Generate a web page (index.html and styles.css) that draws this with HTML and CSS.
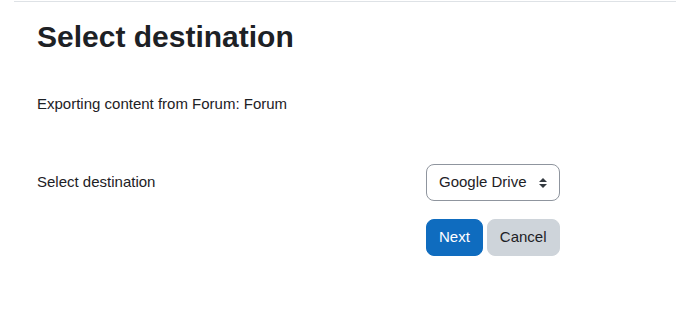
FILE: index.html
```html
<!DOCTYPE html>
<html lang="en">
  <head>
    <meta charset="UTF-8" />
    <meta name="viewport" content="width=device-width, initial-scale=1.0" />
    <title>Select destination</title>
    <link rel="stylesheet" href="styles.css">
  </head>
  <body>
    <div class="page">
      <div class="content">
        <h2>Select destination</h2>
        <p class="intro">Exporting content from Forum: Forum</p>

        <form class="export-form">
          <div class="form-row">
            <label for="destination">Select destination</label>
            <div class="select-wrap">
              <select id="destination" class="custom-select">
                <option>Google Drive</option>
              </select>
              <svg class="select-arrow" width="8" height="10" viewBox="0 0 4 5" aria-hidden="true">
                <path d="M2 0L0 2h4zm0 5L0 3h4z" fill="#343a40" />
              </svg>
            </div>
          </div>

          <div class="form-row">
            <span></span>
            <div class="btn-container">
              <button type="button" class="btn btn-primary">Next</button>
              <button type="button" class="btn btn-secondary">Cancel</button>
            </div>
          </div>
        </form>
      </div>
    </div>
  </body>
</html>
```

FILE: styles.css
```css
* {
  padding: 0;
  margin: 0;
  box-sizing: border-box;
}

body {
  font-family: "Liberation Sans", Arial, sans-serif;
  font-size: 15px;
  line-height: 1.5;
  color: #1d2125;
  background: #fff;
}

.page {
  margin-top: 1px;
  margin-left: 14px;
  border-top: 1px solid #dee2e6;
}

.content {
  padding-left: 23px;
}

h2 {
  font-size: 30px;
  font-weight: 700;
  line-height: 1.2;
  margin-top: 17px;
  margin-bottom: 38px;
}

.intro {
  margin-bottom: 48px;
}

.form-row {
  display: grid;
  grid-template-columns: 389px 1fr;
  align-items: center;
  margin-bottom: 18px;
}

.select-wrap {
  position: relative;
  display: inline-block;
  justify-self: start;
}

.custom-select {
  appearance: none;
  -webkit-appearance: none;
  font-family: inherit;
  font-size: 15px;
  line-height: 1.5;
  color: #1d2125;
  background: #fff;
  border: 1px solid #8f959e;
  border-radius: 8px;
  padding: 6px 32px 6px 12px;
  height: 37px;
}

.select-arrow {
  position: absolute;
  right: 13px;
  top: 14px;
  pointer-events: none;
}

.btn-container {
  display: flex;
  gap: 4px;
}

.btn {
  font-family: inherit;
  font-size: 15px;
  line-height: 1.5;
  padding: 6px 12px;
  border: 1px solid transparent;
  border-radius: 8px;
  height: 37px;
}

.btn-primary {
  background-color: #0f6cbf;
  border-color: #0f6cbf;
  color: #fff;
}

.btn-secondary {
  background-color: #ced4da;
  border-color: #ced4da;
  color: #1d2125;
}
```
